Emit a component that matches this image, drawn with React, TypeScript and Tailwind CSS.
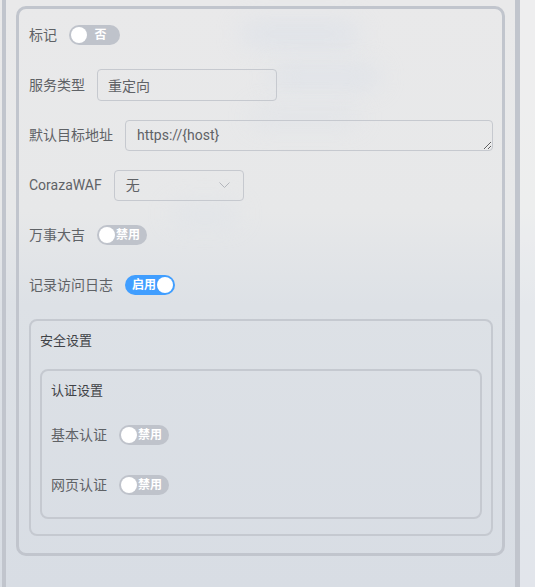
import type { ReactNode } from "react";

function Switch({ on = false, text, width = "w-[50px]" }: { on?: boolean; text: string; width?: string }) {
  const knob = <span className="size-4 shrink-0 rounded-full bg-white" />;
  const label = (
    <span className="flex-1 text-center text-xs leading-5 font-bold text-white">{text}</span>
  );
  if (on) {
    return (
      <div className={`flex h-5 ${width} items-center rounded-full bg-[#409eff] pl-[6px] pr-[2px]`}>
        {label}
        {knob}
      </div>
    );
  }
  return (
    <div className={`flex h-5 ${width} items-center rounded-full bg-[#bfc3cb] pl-[2px] pr-[6px]`}>
      {knob}
      {label}
    </div>
  );
}

function Row({ label, children, last = false }: { label: string; children: ReactNode; last?: boolean }) {
  return (
    <div className={`flex h-8 items-center ${last ? "mb-[16px]" : "mb-[18px]"}`}>
      <span className="shrink-0 pr-3 text-sm leading-8 text-[#5f6266]">{label}</span>
      {children}
    </div>
  );
}

function Fieldset({ title, children, className = "" }: { title: string; children: ReactNode; className?: string }) {
  return (
    <div className={`rounded-[8px] border-2 border-[#c5c9d0] px-[9px] pt-[9px] ${className}`}>
      <div className="mb-[17px] h-[22px] text-[13px] leading-[22px] text-[#3f4247]">{title}</div>
      {children}
    </div>
  );
}

export default function App() {
  return (
    <div className="relative flex h-[587px] w-full overflow-hidden bg-[linear-gradient(180deg,#e9e9ea_0%,#e7e8e9_36%,#dde1e6_52%,#d8dde4_100%)] font-['Roboto','Noto_Sans_CJK_SC',sans-serif]">
      {/* blurred shapes behind the overlay */}
      <div className="pointer-events-none absolute left-[240px] top-[22px] h-[24px] w-[120px] rounded-full bg-[#d6dde8] opacity-50 blur-md" />
      <div className="pointer-events-none absolute left-[270px] top-[66px] h-[22px] w-[110px] rounded-full bg-[#d6dde8] opacity-50 blur-md" />
      <div className="pointer-events-none absolute left-[250px] top-[108px] h-[18px] w-[110px] rounded-full bg-[#d8dee7] opacity-40 blur-md" />
      <div className="pointer-events-none absolute left-[170px] top-[204px] h-[20px] w-[70px] rounded-full bg-[#d9dfe8] opacity-40 blur-md" />

      <div className="relative ml-[2px] h-full w-[518px] shrink-0 border-l-4 border-r-[5px] border-[#c1c5cd] px-[10px] pt-[6px]">
        <div className="rounded-[10px] border-[3px] border-[#c1c5cd] pb-[17px] pl-[10px] pr-[9px] pt-[10px]">
          <Row label="标记">
            <Switch text="否" width="w-[51px]" />
          </Row>
          <Row label="服务类型">
            <input
              readOnly
              value="重定向"
              className="h-8 w-[180px] rounded-[4px] border border-[#c6c9cf] bg-transparent px-[10px] text-sm text-[#5f6266] outline-none"
            />
          </Row>
          <Row label="默认目标地址">
            <textarea
              readOnly
              value="https://{host}"
              className="h-[31px] flex-1 rounded-[4px] border border-[#c6c9cf] bg-transparent px-[11px] py-[4px] text-sm leading-[21px] text-[#5f6266] outline-none"
            />
          </Row>
          <Row label="CorazaWAF">
            <div className="flex h-[31px] w-[130px] items-center justify-between rounded-[4px] border border-[#c6c9cf] pl-[11px] pr-[13px]">
              <span className="text-sm text-[#5f6266]">无</span>
              <svg width="11" height="6" viewBox="0 0 11 6" fill="none">
                <polyline points="0.5,0.5 5.5,5.5 10.5,0.5" stroke="#b3b6bc" strokeWidth="1" />
              </svg>
            </div>
          </Row>
          <Row label="万事大吉">
            <Switch text="禁用" />
          </Row>
          <Row label="记录访问日志">
            <Switch on text="启用" />
          </Row>

          <Fieldset title="安全设置" className="pb-[15px]">
            <Fieldset title="认证设置">
              <Row label="基本认证">
                <Switch text="禁用" />
              </Row>
              <Row label="网页认证" last>
                <Switch text="禁用" />
              </Row>
            </Fieldset>
          </Fieldset>
        </div>
      </div>
      <div className="flex-1 bg-white/25" />
    </div>
  );
}
